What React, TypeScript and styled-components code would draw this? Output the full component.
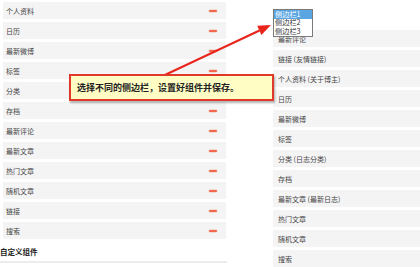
import React from "react";
import styled, { createGlobalStyle } from "styled-components";

const Global = createGlobalStyle`
  html, body { margin: 0; padding: 0; background: #fff; }
  body { font-family: "Noto Sans CJK SC", "Noto Sans", sans-serif; }
`;

const Page = styled.div`
  position: relative;
  width: 420px;
  height: 267px;
  overflow: hidden;
  display: flex;
  background: #fff;
`;

const LeftCol = styled.div`
  width: 223px;
  margin-left: 3px;
  padding-top: 2px;
  display: flex;
  flex-direction: column;
  gap: 3px;
`;

const Row = styled.div`
  height: 17px;
  flex: none;
  display: flex;
  align-items: center;
  justify-content: space-between;
  background: #f4f4f4;
  padding: 0 9px 0 3px;
  font-size: 7px;
  color: #444;
  white-space: nowrap;
`;

const Minus = styled.span`
  width: 8px;
  height: 2px;
  border-radius: 1px;
  background: #f0694e;
  box-shadow: 0 0 0.6px 0.4px rgba(240, 120, 90, 0.45);
`;

const Heading = styled.div`
  margin-top: 2px;
  margin-left: -3px;
  height: 14px;
  display: flex;
  align-items: center;
  font-size: 7.5px;
  font-weight: 700;
  color: #222;
`;

const Rule = styled.div`
  margin-left: -3px;
  width: 227px;
  height: 2px;
  background: #ececec;
`;

const RightCol = styled.div`
  margin-left: 47px;
  flex: 1;
  padding-top: 30px;
  display: flex;
  flex-direction: column;
  gap: 3px;
`;

const RRow = styled(Row)`
  padding: 0 0 0 5px;
`;

const Listbox = styled.div`
  position: absolute;
  left: 273px;
  top: 9px;
  width: 38px;
  height: 26px;
  background: #fff;
  border: 1px solid #7b7b7b;
  color: #333;
  display: flex;
  flex-direction: column;
  z-index: 3;
`;

const Option = styled.div<{ $sel?: boolean }>`
  height: 8.7px;
  overflow: hidden;
  display: flex;
  align-items: center;
  font-size: 7.2px;
  line-height: 1;
  padding-left: 1px;
  background: ${(p) => (p.$sel ? "#5aa6e2" : "transparent")};
  color: ${(p) => (p.$sel ? "#fff" : "#333")};
  white-space: nowrap;
`;

const Callout = styled.div`
  position: absolute;
  left: 69px;
  top: 74px;
  width: 195px;
  height: 23px;
  border: 2px solid #e0382a;
  background: #fffdc4;
  box-shadow: 1px 2px 2px rgba(0, 0, 0, 0.3);
  display: flex;
  align-items: center;
  padding-left: 6px;
  font-size: 9px;
  font-weight: 700;
  color: #222;
  white-space: nowrap;
  z-index: 2;
`;

const ArrowSvg = styled.svg`
  position: absolute;
  left: 0;
  top: 0;
  z-index: 1;
  pointer-events: none;
`;

const left = [
  "个人资料",
  "日历",
  "最新微博",
  "标签",
  "分类",
  "存档",
  "最新评论",
  "最新文章",
  "热门文章",
  "随机文章",
  "链接",
  "搜索",
];

const right = [
  "最新评论",
  "链接 (友情链接)",
  "个人资料 (关于博主)",
  "日历",
  "最新微博",
  "标签",
  "分类 (日志分类)",
  "存档",
  "最新文章 (最新日志)",
  "热门文章",
  "随机文章",
  "搜索",
];

export default function App() {
  return (
    <>
      <Global />
      <Page>
        <LeftCol>
          {left.map((t) => (
            <Row key={t}>
              <span>{t}</span>
              <Minus />
            </Row>
          ))}
          <Heading>自定义组件</Heading>
          <Rule />
        </LeftCol>
        <RightCol>
          {right.map((t) => (
            <RRow key={t}>
              <span>{t}</span>
            </RRow>
          ))}
        </RightCol>
        <Listbox>
          <Option $sel>侧边栏1</Option>
          <Option>侧边栏2</Option>
          <Option>侧边栏3</Option>
        </Listbox>
        <ArrowSvg width="420" height="267" viewBox="0 0 420 267">
          <line x1="150" y1="82" x2="259.5" y2="30.5" stroke="#e8241b" strokeWidth="2" />
          <polygon points="271,25 261.4,35 257.2,25.8" fill="#e8241b" />
        </ArrowSvg>
        <Callout>选择不同的侧边栏，设置好组件并保存。</Callout>
      </Page>
    </>
  );
}
